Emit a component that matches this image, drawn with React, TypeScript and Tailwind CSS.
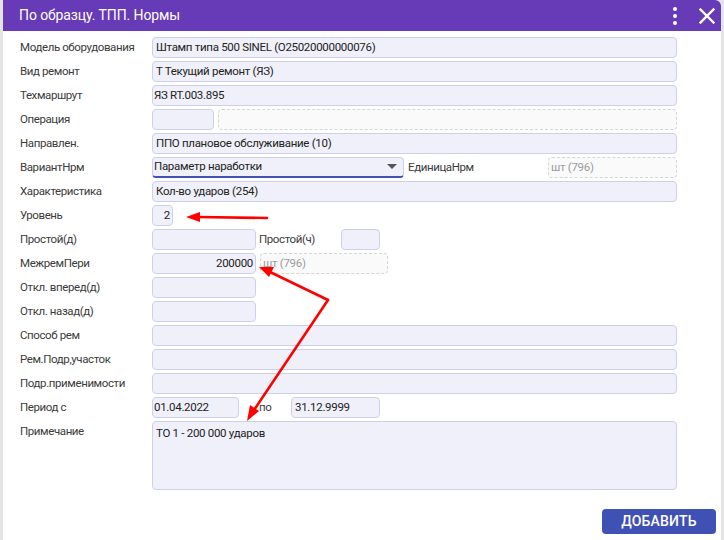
import React from "react";

const inputCls =
  "h-[21px] bg-[#eff0f9] border border-[#cdd0ec] rounded-[4px] flex items-center px-[3px] text-[11.5px] text-[#222] tracking-[-0.3px] whitespace-nowrap overflow-hidden";
const dashedCls =
  "h-[21px] bg-[#fafafa] border border-dashed border-[#d6d6d6] rounded-[4px] flex items-center px-[2px] text-[11.5px] tracking-[-0.3px] text-[#9a9a9a] whitespace-nowrap";
const labelText = "text-[11.5px] tracking-[-0.4px] text-[#3b3b3b] whitespace-nowrap";

function Row({ label, children, className = "" }: { label: string; children?: React.ReactNode; className?: string }) {
  return (
    <div className={"flex items-start mb-[3px] " + className}>
      <div className={"w-[132px] shrink-0 h-[21px] flex items-center " + labelText}>{label}</div>
      <div className="flex-1 flex items-center">{children}</div>
    </div>
  );
}

export default function App() {
  return (
    <div className="w-[724px] h-[540px] bg-[#e4e4e4] overflow-hidden font-['Roboto',sans-serif]">
      <div className="ml-[3px] w-[718px] h-[540px] bg-white rounded-tr-[6px] relative flex flex-col">
        {/* header */}
        <div className="h-[31px] bg-[#673ab7] rounded-tr-[6px] flex items-center pl-[16px] pr-[2px] shrink-0">
          <div className="text-white text-[14px] tracking-[-0.1px] flex-1">По образцу. ТПП. Нормы</div>
          <div className="w-[24px] h-[24px] flex flex-col items-center justify-center gap-[3px] mr-[8px]">
            <span className="w-[4px] h-[4px] rounded-full bg-white" />
            <span className="w-[4px] h-[4px] rounded-full bg-white" />
            <span className="w-[4px] h-[4px] rounded-full bg-white" />
          </div>
          <svg width="24" height="24" viewBox="0 0 24 24">
            <path d="M5.5 5.5 L18.5 18.5 M18.5 5.5 L5.5 18.5" stroke="white" strokeWidth="2.4" strokeLinecap="square" />
          </svg>
        </div>

        {/* form */}
        <div className="pl-[17px] pr-[44px] pt-[6px]">
          <Row label="Модель оборудования">
            <div className={inputCls + " flex-1"}>Штамп типа 500 SINEL (O25020000000076)</div>
          </Row>
          <Row label="Вид ремонт">
            <div className={inputCls + " flex-1"}>Т Текущий ремонт (ЯЗ)</div>
          </Row>
          <Row label="Техмаршрут">
            <div className={inputCls + " flex-1 !px-[1px]"}>ЯЗ RT.003.895</div>
          </Row>
          <Row label="Операция">
            <div className={inputCls + " w-[62px]"} />
            <div className={dashedCls + " flex-1 ml-[4px]"} />
          </Row>
          <Row label="Направлен.">
            <div className={inputCls + " flex-1"}>ППО плановое обслуживание (10)</div>
          </Row>
          <Row label="ВариантНрм">
            <div className="h-[21px] w-[252px] bg-[#eff0f9] border border-[#cdd0ec] border-b-2 border-b-[#3f51b5] rounded-[4px] flex items-center pl-[1px] pr-[6px] text-[11.5px] tracking-[-0.3px] text-[#222]">
              <span className="flex-1">Параметр наработки</span>
              <svg width="10" height="6" viewBox="0 0 10 6">
                <path d="M0 0 L10 0 L5 5 Z" fill="#555" />
              </svg>
            </div>
            <div className={"w-[144px] pl-[4px] " + labelText}>ЕдиницаНрм</div>
            <div className={dashedCls + " flex-1"}>шт (796)</div>
          </Row>
          <Row label="Характеристика">
            <div className={inputCls + " flex-1"}>Кол-во ударов (254)</div>
          </Row>
          <Row label="Уровень">
            <div className={inputCls + " w-[21px] justify-end !px-[2px]"}>2</div>
          </Row>
          <Row label="Простой(д)">
            <div className={inputCls + " w-[104px]"} />
            <div className={"w-[85px] pl-[3px] " + labelText}>Простой(ч)</div>
            <div className={inputCls + " w-[39px]"} />
          </Row>
          <Row label="МежремПери">
            <div className={inputCls + " w-[104px] justify-end !px-[2px]"}>200000</div>
            <div className={dashedCls + " w-[128px] ml-[4px]"}>шт (796)</div>
          </Row>
          <Row label="Откл. вперед(д)">
            <div className={inputCls + " w-[104px]"} />
          </Row>
          <Row label="Откл. назад(д)">
            <div className={inputCls + " w-[104px]"} />
          </Row>
          <Row label="Способ рем">
            <div className={inputCls + " flex-1"} />
          </Row>
          <Row label="Рем.Подр,участок">
            <div className={inputCls + " flex-1"} />
          </Row>
          <Row label="Подр.применимости">
            <div className={inputCls + " flex-1"} />
          </Row>
          <Row label="Период с">
            <div className={inputCls + " w-[87px] !px-[1px]"}>01.04.2022</div>
            <div className={"w-[52px] pl-[20px] " + labelText}>по</div>
            <div className={inputCls + " w-[89px]"}>31.12.9999</div>
          </Row>
          <Row label="Примечание">
            <div className="flex-1 h-[69px] bg-[#eff0f9] border border-[#cdd0ec] rounded-[4px] px-[3px] pt-[3px] text-[11.5px] text-[#222] tracking-[-0.3px]">
              ТО 1 - 200 000 ударов
            </div>
          </Row>
        </div>

        {/* footer */}
        <div className="flex justify-end pr-[5px] mt-[16px]">
          <button className="w-[114px] h-[25px] bg-[#3f51b5] rounded-[4px] text-white text-[14px] font-medium tracking-[0.2px]">
            ДОБАВИТЬ
          </button>
        </div>

        {/* annotation arrows */}
        <svg className="absolute left-[-3px] top-0 pointer-events-none" width="724" height="540" viewBox="0 0 724 540">
          <g stroke="#f00" strokeWidth="2.6" strokeLinecap="round" fill="none">
            <line x1="267" y1="218" x2="198" y2="217" />
            <line x1="328" y1="300" x2="270" y2="272" />
            <line x1="328" y1="300" x2="254" y2="410" />
          </g>
          <g fill="#f00">
            <polygon points="186,217 200,212 200,222" />
            <polygon points="259,267 274,267 269,277" />
            <polygon points="247,421 250,405 259,411" />
          </g>
        </svg>
      </div>
    </div>
  );
}
